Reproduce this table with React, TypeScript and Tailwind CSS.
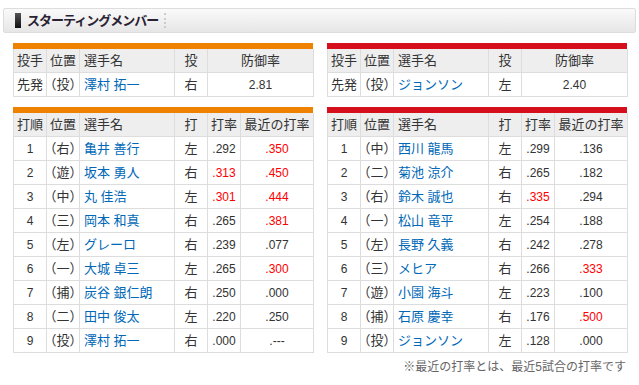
import React from 'react';

type Row = {
  no: string;
  pos: string;
  name: string;
  hand: string;
  avg: string;
  avgRed?: boolean;
  recent: string;
  recentRed?: boolean;
};

const giants: Row[] = [
  { no: '1', pos: '（右）', name: '亀井 善行', hand: '左', avg: '.292', recent: '.350', recentRed: true },
  { no: '2', pos: '（遊）', name: '坂本 勇人', hand: '右', avg: '.313', avgRed: true, recent: '.450', recentRed: true },
  { no: '3', pos: '（中）', name: '丸 佳浩', hand: '左', avg: '.301', avgRed: true, recent: '.444', recentRed: true },
  { no: '4', pos: '（三）', name: '岡本 和真', hand: '右', avg: '.265', recent: '.381', recentRed: true },
  { no: '5', pos: '（左）', name: 'グレーロ', hand: '右', avg: '.239', recent: '.077' },
  { no: '6', pos: '（一）', name: '大城 卓三', hand: '左', avg: '.265', recent: '.300', recentRed: true },
  { no: '7', pos: '（捕）', name: '炭谷 銀仁朗', hand: '右', avg: '.250', recent: '.000' },
  { no: '8', pos: '（二）', name: '田中 俊太', hand: '左', avg: '.220', recent: '.250' },
  { no: '9', pos: '（投）', name: '澤村 拓一', hand: '右', avg: '.000', recent: '.---' },
];

const carp: Row[] = [
  { no: '1', pos: '（中）', name: '西川 龍馬', hand: '左', avg: '.299', recent: '.136' },
  { no: '2', pos: '（二）', name: '菊池 涼介', hand: '右', avg: '.265', recent: '.182' },
  { no: '3', pos: '（右）', name: '鈴木 誠也', hand: '右', avg: '.335', avgRed: true, recent: '.294' },
  { no: '4', pos: '（一）', name: '松山 竜平', hand: '左', avg: '.254', recent: '.188' },
  { no: '5', pos: '（左）', name: '長野 久義', hand: '右', avg: '.242', recent: '.278' },
  { no: '6', pos: '（三）', name: 'メヒア', hand: '右', avg: '.266', recent: '.333', recentRed: true },
  { no: '7', pos: '（遊）', name: '小園 海斗', hand: '左', avg: '.223', recent: '.100' },
  { no: '8', pos: '（捕）', name: '石原 慶幸', hand: '右', avg: '.176', recent: '.500', recentRed: true },
  { no: '9', pos: '（投）', name: 'ジョンソン', hand: '左', avg: '.128', recent: '.000' },
];

const cell = 'h-[24px] border-r border-b border-[#dddddd] flex items-center';
const head = `${cell} bg-[#eeeeee]`;

function PitcherTable({ bar, name, hand, era }: { bar: string; name: string; hand: string; era: string }) {
  return (
    <div className={`w-[300px] border-t-[6px] ${bar}`}>
      <div className="grid grid-cols-[33px_33px_95px_33px_106px] border-l border-[#dddddd]">
        <div className={`${head} justify-center`}>投手</div>
        <div className={`${head} justify-center`}>位置</div>
        <div className={`${head} pl-1`}>選手名</div>
        <div className={`${head} justify-center`}>投</div>
        <div className={`${head} justify-center`}>防御率</div>

        <div className={`${cell} justify-center`}>先発</div>
        <div className={`${cell} justify-center whitespace-nowrap`}>（投）</div>
        <div className={`${cell} pl-1 text-[#0068b7]`}>{name}</div>
        <div className={`${cell} justify-center`}>{hand}</div>
        <div className={`${cell} justify-center text-[12px]`}>{era}</div>
      </div>
    </div>
  );
}

function LineupTable({ bar, rows }: { bar: string; rows: Row[] }) {
  return (
    <div className={`w-[300px] border-t-[6px] ${bar}`}>
      <div className="grid grid-cols-[33px_33px_95px_33px_33px_73px] border-l border-[#dddddd]">
        <div className={`${head} justify-center`}>打順</div>
        <div className={`${head} justify-center`}>位置</div>
        <div className={`${head} pl-1`}>選手名</div>
        <div className={`${head} justify-center`}>打</div>
        <div className={`${head} justify-center`}>打率</div>
        <div className={`${head} justify-center whitespace-nowrap`}>最近の打率</div>
        {rows.map((r) => (
          <React.Fragment key={r.no}>
            <div className={`${cell} justify-center text-[12px]`}>{r.no}</div>
            <div className={`${cell} justify-center whitespace-nowrap`}>{r.pos}</div>
            <div className={`${cell} pl-1 text-[#0068b7] whitespace-nowrap`}>{r.name}</div>
            <div className={`${cell} justify-center`}>{r.hand}</div>
            <div className={`${cell} justify-center text-[12px] ${r.avgRed ? 'text-[#ff0000]' : ''}`}>{r.avg}</div>
            <div className={`${cell} justify-center text-[12px] ${r.recentRed ? 'text-[#ff0000]' : ''}`}>{r.recent}</div>
          </React.Fragment>
        ))}
      </div>
    </div>
  );
}

export default function App() {
  return (
    <div
      className="w-[639px] h-[385px] bg-white text-[13px] text-[#333333] pt-[8px] px-[3px]"
      style={{ fontFamily: '"Liberation Sans", "Noto Sans CJK JP", sans-serif' }}
    >
      {/* Title bar */}
      <div className="h-[25px] w-[633px] rounded-[2px] border border-[#dddddd] bg-gradient-to-b from-[#fafafa] via-[#f0f0f0] to-[#e6e6e6] flex items-center">
        <div className="ml-[11px] w-[6px] h-[15px] bg-gradient-to-b from-[#555555] to-[#111111]" />
        <span className="ml-[6px] text-[13px] font-bold text-[#2a2233] tracking-[-1px]">スターティングメンバー</span>
        <div className="ml-[6px] h-[15px] border-l-2 border-dotted border-[#cccccc]" />
      </div>

      <div className="pl-[10px] mt-[10px] flex gap-[14px]">
        <PitcherTable bar="border-[#ee8200]" name="澤村 拓一" hand="右" era="2.81" />
        <PitcherTable bar="border-[#d5101c]" name="ジョンソン" hand="左" era="2.40" />
      </div>

      <div className="pl-[10px] mt-[10px] flex gap-[14px]">
        <LineupTable bar="border-[#ee8200]" rows={giants} />
        <LineupTable bar="border-[#d5101c]" rows={carp} />
      </div>

      <div className="w-[623px] text-right text-[12px] text-[#666666] mt-[5px]">
        ※最近の打率とは、最近5試合の打率です
      </div>
    </div>
  );
}
